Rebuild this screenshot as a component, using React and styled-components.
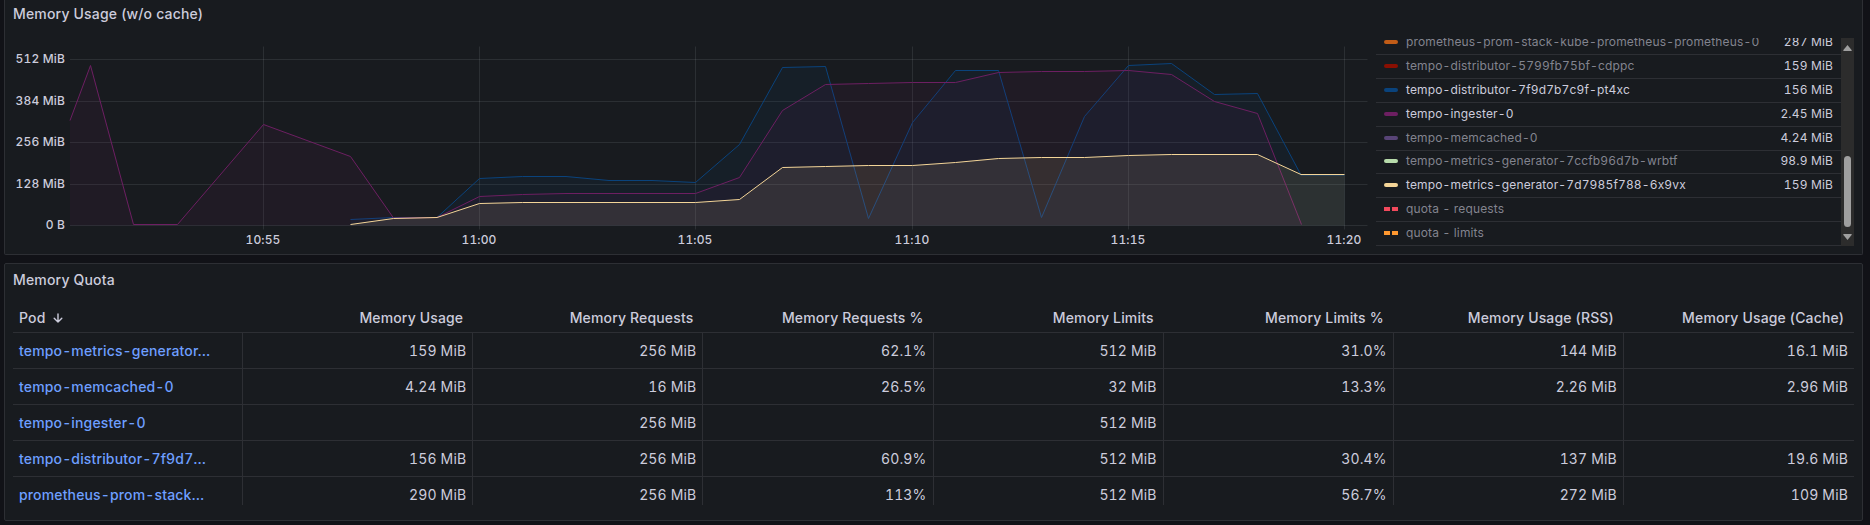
import React from "react";
import styled, { createGlobalStyle } from "styled-components";

const GlobalStyle = createGlobalStyle`
  * { box-sizing: border-box; }
  body {
    margin: 0;
    background: #111217;
    color: rgb(204, 204, 220);
    font-family: Inter, "Liberation Sans", sans-serif;
    font-size: 14px;
    letter-spacing: 0.15px;
    overflow: hidden;
  }
`;

const line = "#2d2f34";

const Dashboard = styled.main`
  display: flex;
  flex-direction: column;
  gap: 8px;
  width: 1863px;
  height: 525px;
  padding-left: 4px;
`;

const Panel = styled.section`
  display: flex;
  flex-direction: column;
  flex: none;
  height: ${(p) => p.$height}px;
  padding: 0 8px;
  background: #181b1f;
  border: 1px solid ${line};
  border-radius: 2px;
  ${(p) => p.$cut && "border-top: 0; border-top-left-radius: 0; border-top-right-radius: 0;"}
`;

const Title = styled.h2`
  margin: 0;
  height: ${(p) => p.$height}px;
  line-height: ${(p) => p.$line}px;
  font-size: 14px;
  font-weight: 500;
  letter-spacing: 0.18px;
`;

const PanelBody = styled.div`
  display: flex;
  height: 208px;
`;

const Chart = styled.svg`
  flex: none;
  width: 1363px;
  height: 212px;
  display: block;
`;

const AxisText = styled.text`
  font-size: 12px;
  font-weight: 500;
  letter-spacing: 0.15px;
  font-variant-numeric: tabular-nums;
  fill: rgb(204, 204, 220);
`;

const Legend = styled.div`
  display: flex;
  flex-direction: column;
  justify-content: flex-end;
  width: 465px;
  height: 208px;
  overflow: hidden;
`;

const LegendRow = styled.div`
  display: flex;
  align-items: center;
  flex: none;
  height: 23.89px;
  padding: 0 8px 1px;
  border-bottom: 1px solid ${line};
  font-size: 12px;
  line-height: 18px;
  font-variant-numeric: tabular-nums;
  white-space: nowrap;
  color: ${(p) => (p.$dim ? "rgba(204, 204, 220, 0.6)" : "rgb(204, 204, 220)")};
`;

const Swatch = styled.span`
  width: 14px;
  height: 4px;
  margin-right: 8px;
  border-radius: ${(p) => (p.$dashed ? 0 : 2)}px;
  background: ${(p) =>
    p.$dashed
      ? `linear-gradient(90deg, ${p.$color} 6px, transparent 6px 8px, ${p.$color} 8px)`
      : p.$color};
`;

const LegendValue = styled.span`
  margin-left: auto;
  color: rgb(204, 204, 220);
`;

const Scrollbar = styled.div`
  display: flex;
  flex-direction: column;
  align-items: center;
  width: 13px;
  height: 208px;
  padding: 7px 0 6px;
  background: #2c2c2c;
`;

const Arrow = styled.svg`
  flex: none;
  width: 9px;
  height: 6px;
  fill: #9f9f9f;
`;

const Thumb = styled.div`
  width: 7px;
  height: 71px;
  margin: auto 0 7px;
  border-radius: 3.5px;
  background: #9f9f9f;
`;

const Table = styled.div`
  display: flex;
  flex-direction: column;
  height: 203px;
  overflow: hidden;
`;

const TableRow = styled.div`
  display: grid;
  grid-template-columns: repeat(8, 1fr);
  flex: none;
  height: ${(p) => (p.$header ? 31 : 36)}px;
  border-bottom: 1px solid ${line};
`;

const HeaderCell = styled.div`
  display: flex;
  align-items: center;
  justify-content: ${(p) => (p.$first ? "flex-start" : "flex-end")};
  gap: 8px;
  padding: ${(p) => (p.$first ? "2px 6px 0" : "2px 10px 0 6px")};
  font-weight: 500;
  line-height: 22px;
  white-space: nowrap;
`;

const Cell = styled.div`
  padding: 0 6px;
  line-height: 36px;
  font-variant-numeric: tabular-nums;
  text-align: right;
  white-space: nowrap;
  border-right: 1px solid ${line};
  &:first-child { text-align: left; }
  &:last-child { border-right: 0; }
`;

const PodLink = styled.a`
  color: #6e9fff;
  font-weight: 500;
`;

const yTicks = [
  [59.5, "512 MiB"],
  [101.5, "384 MiB"],
  [142.5, "256 MiB"],
  [184.5, "128 MiB"],
  [225.5, "0 B"],
];
const xTicks = [
  [263.5, "10:55"],
  [479.5, "11:00"],
  [695.5, "11:05"],
  [912.5, "11:10"],
  [1128.5, "11:15"],
  [1344.5, "11:20"],
];

const series = [
  {
    color: "#0a437c",
    points: [
      [350.5, 219.5], [393.5, 217.5], [437, 217.5], [479.5, 178.5], [522.5, 176.5], [566, 176.5],
      [609, 180.5], [652, 180.5], [695.5, 182.5], [739.5, 144.5], [782.5, 67.5], [825.5, 66.5],
      [868.5, 218.5], [912.5, 122.5], [955.5, 70.5], [998.5, 70.5], [1041.5, 217.5], [1084.5, 116.5],
      [1128.5, 65.5], [1171.5, 63.5], [1214.5, 94.5], [1257.5, 93.5], [1301, 175], [1344.5, 175],
    ],
  },
  {
    color: "#6d1f62",
    points: [
      [70, 120.5], [90.5, 65.5], [133.5, 224.5], [177.5, 224.5], [263.5, 124.5], [350.5, 156.5],
      [393.5, 218], [437, 217.5], [479.5, 196.5], [522.5, 194.5], [566, 193.5], [695.5, 193.5],
      [739.5, 177.5], [782.5, 110.5], [825.5, 84.5], [868.5, 83.5], [912.5, 82.5], [955.5, 82.5],
      [998.5, 72.5], [1041.5, 71.5], [1084.5, 71.5], [1128.5, 70.5], [1171.5, 74.5], [1214.5, 101.5],
      [1257.5, 113.5], [1301.5, 224.5],
    ],
  },
  {
    color: "#f4d598",
    points: [
      [350.5, 224.5], [393.5, 218.5], [437, 217.5], [479.5, 203.5], [522.5, 202.5], [695.5, 202.5],
      [739.5, 199.5], [782.5, 167.5], [825.5, 166.5], [868.5, 165.5], [912.5, 165.5], [955.5, 162.5],
      [998.5, 158.5], [1041.5, 157.5], [1084.5, 157.5], [1128.5, 155.5], [1171.5, 154.5],
      [1257.5, 154.5], [1301, 174.5], [1344.5, 174.5],
    ],
  },
];

const legend = [
  ["prometheus-prom-stack-kube-prometheus-prometheus-0", "287 MiB", "#c15c17", true],
  ["tempo-distributor-5799fb75bf-cdppc", "159 MiB", "#890f02", true],
  ["tempo-distributor-7f9d7b7c9f-pt4xc", "156 MiB", "#0a437c", false],
  ["tempo-ingester-0", "2.45 MiB", "#6d1f62", false],
  ["tempo-memcached-0", "4.24 MiB", "#584477", true],
  ["tempo-metrics-generator-7ccfb96d7b-wrbtf", "98.9 MiB", "#b7dbab", true],
  ["tempo-metrics-generator-7d7985f788-6x9vx", "159 MiB", "#f4d598", false],
  ["quota - requests", "", "#f2495c", true, true],
  ["quota - limits", "", "#ff9830", true, true],
];

const columns = [
  "Memory Usage",
  "Memory Requests",
  "Memory Requests %",
  "Memory Limits",
  "Memory Limits %",
  "Memory Usage (RSS)",
  "Memory Usage (Cache)",
];

const rows = [
  ["tempo-metrics-generator…", "159 MiB", "256 MiB", "62.1%", "512 MiB", "31.0%", "144 MiB", "16.1 MiB"],
  ["tempo-memcached-0", "4.24 MiB", "16 MiB", "26.5%", "32 MiB", "13.3%", "2.26 MiB", "2.96 MiB"],
  ["tempo-ingester-0", "", "256 MiB", "", "512 MiB", "", "", ""],
  ["tempo-distributor-7f9d7…", "156 MiB", "256 MiB", "60.9%", "512 MiB", "30.4%", "137 MiB", "19.6 MiB"],
  ["prometheus-prom-stack…", "290 MiB", "256 MiB", "113%", "512 MiB", "56.7%", "272 MiB", "109 MiB"],
];

const toPath = (points) => points.map(([x, y], i) => `${i ? "L" : "M"}${x} ${y}`).join("");
const toArea = (points) =>
  `${toPath(points)}L${points[points.length - 1][0]} 225.5L${points[0][0]} 225.5Z`;

function UsageChart() {
  return (
    <Chart viewBox="13 38 1363 212">
      <g stroke="rgba(240, 250, 255, 0.09)" strokeWidth="1">
        {yTicks.map(([y]) => (
          <path key={y} d={`M70 ${y}H1367.5`} />
        ))}
        {xTicks.map(([x]) => (
          <path key={x} d={`M${x} 46.5V229.5`} />
        ))}
      </g>
      {series.map((s) => (
        <g key={s.color}>
          <path d={toArea(s.points)} fill={s.color} fillOpacity="0.1" />
          <path d={toPath(s.points)} fill="none" stroke={s.color} strokeWidth="1" />
        </g>
      ))}
      {yTicks.map(([y, label]) => (
        <AxisText key={label} x="65" y={y + 3.5} textAnchor="end">{label}</AxisText>
      ))}
      {xTicks.map(([x, label]) => (
        <AxisText key={label} x={x - 0.5} y="244" textAnchor="middle">{label}</AxisText>
      ))}
    </Chart>
  );
}

export default function App() {
  return (
    <>
      <GlobalStyle />
      <Dashboard>
        <Panel $height={255} $cut>
          <Title $height={38} $line={28}>Memory Usage (w/o cache)</Title>
          <PanelBody>
            <UsageChart />
            <Legend>
              {legend.map(([name, value, color, dim, dashed]) => (
                <LegendRow key={name} $dim={dim}>
                  <Swatch $color={color} $dashed={dashed} />
                  {name}
                  <LegendValue>{value}</LegendValue>
                </LegendRow>
              ))}
            </Legend>
            <Scrollbar>
              <Arrow viewBox="0 0 9 6"><path d="M4.5 0L8.8 5.2Q9 6 8 6H1Q0 6 .2 5.2Z" /></Arrow>
              <Thumb />
              <Arrow viewBox="0 0 9 6"><path d="M4.5 6L8.8 .8Q9 0 8 0H1Q0 0 .2 .8Z" /></Arrow>
            </Scrollbar>
          </PanelBody>
        </Panel>
        <Panel $height={258}>
          <Title $height={38} $line={31}>Memory Quota</Title>
          <Table>
            <TableRow $header>
              <HeaderCell $first>
                Pod
                <svg width="10" height="10" viewBox="0 0 10 10" fill="none" stroke="currentColor" strokeWidth="1.4" strokeLinecap="round" strokeLinejoin="round">
                  <path d="M5 1V9M1.2 5.3L5 9L8.8 5.3" />
                </svg>
              </HeaderCell>
              {columns.map((c) => (
                <HeaderCell key={c}>{c}</HeaderCell>
              ))}
            </TableRow>
            {rows.map(([pod, ...values]) => (
              <TableRow key={pod}>
                <Cell><PodLink>{pod}</PodLink></Cell>
                {values.map((v, i) => (
                  <Cell key={i}>{v}</Cell>
                ))}
              </TableRow>
            ))}
          </Table>
        </Panel>
      </Dashboard>
    </>
  );
}
